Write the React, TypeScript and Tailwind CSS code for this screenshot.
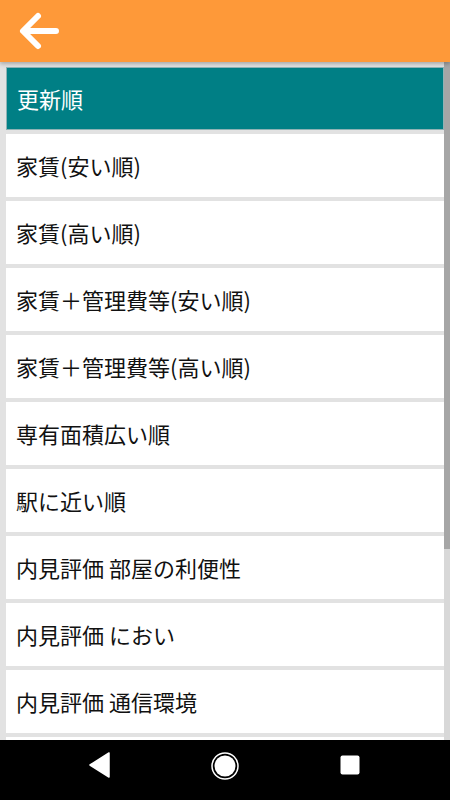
import React from "react";

const items = [
  "更新順",
  "家賃(安い順)",
  "家賃(高い順)",
  "家賃＋管理費等(安い順)",
  "家賃＋管理費等(高い順)",
  "専有面積広い順",
  "駅に近い順",
  "内見評価 部屋の利便性",
  "内見評価 におい",
  "内見評価 通信環境",
  "",
];

export default function App() {
  return (
    <div
      className="w-[450px] h-[800px] flex flex-col bg-[#e2e2e2] overflow-hidden"
      style={{ fontFamily: '"Noto Sans CJK JP", "Noto Sans", Roboto, sans-serif' }}
    >
      <div className="h-[62px] shrink-0 bg-[#fe9939] flex items-center pl-[18px] relative z-10 shadow-[0_2px_4px_rgba(0,0,0,0.25)]">
        <svg width="42" height="40" viewBox="0 0 42 40">
          <path
            d="M38 20 H6 M20 5 L5 20 L20 35"
            fill="none"
            stroke="white"
            strokeWidth="6"
            strokeLinecap="round"
            strokeLinejoin="round"
          />
        </svg>
      </div>
      <div className="flex-1 flex min-h-0">
        <div className="flex-1 flex flex-col gap-[4px] pt-[5px] pl-[6px] overflow-hidden">
          {items.map((t, i) => (
            <div
              key={i}
              className={
                i === 0
                  ? "h-[63px] shrink-0 flex items-center pl-[10px] bg-[#007f85] text-white text-[22px] border border-[#8fb3b5]"
                  : "h-[63px] shrink-0 flex items-center pl-[10px] bg-white text-[#111111] text-[22px]"
              }
            >
              {t}
            </div>
          ))}
        </div>
        <div className="w-[6px] shrink-0 flex flex-col bg-[#d8d8d8]">
          <div className="h-[487px] bg-[#a6a6a6]" />
        </div>
      </div>
      <div className="h-[60px] shrink-0 bg-black relative">
        <svg width="22" height="26" viewBox="0 0 22 26" className="absolute left-[89px] top-[12px]">
          <path d="M20 1 L20 25 L1 13 Z" fill="white" strokeLinejoin="round" stroke="white" strokeWidth="1.5" />
        </svg>
        <svg width="30" height="30" viewBox="0 0 30 30" className="absolute left-[210px] top-[11px]">
          <circle cx="15" cy="15" r="13" fill="none" stroke="white" strokeWidth="1.5" />
          <circle cx="15" cy="15" r="10.5" fill="white" />
        </svg>
        <svg width="20" height="20" viewBox="0 0 20 20" className="absolute left-[340px] top-[15px]">
          <rect x="0.5" y="0.5" width="19" height="19" rx="2" fill="white" />
        </svg>
      </div>
    </div>
  );
}
